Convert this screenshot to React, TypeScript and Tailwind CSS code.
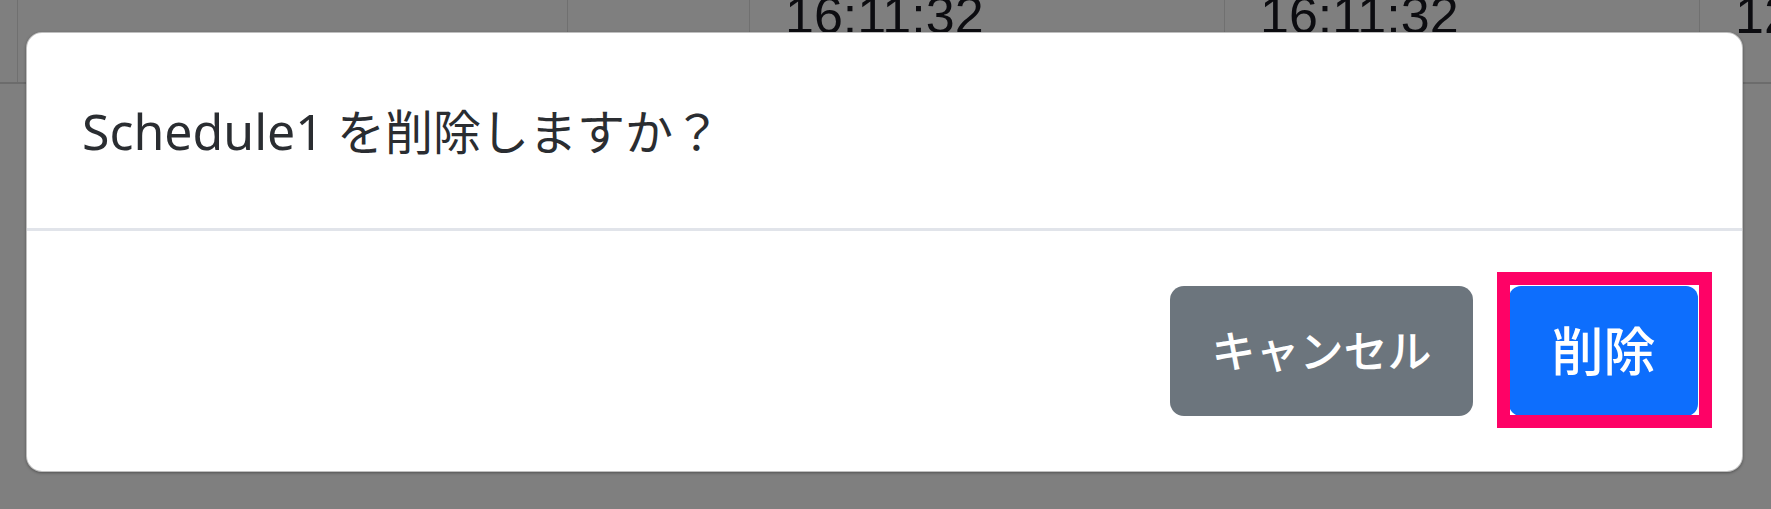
const cols = [
  { w: 18, text: "" },
  { w: 550, text: "" },
  { w: 182, text: "" },
  { w: 475, text: "16:11:32" },
  { w: 475, text: "16:11:32" },
  { w: 71, text: "12:11:32" },
];

function BackgroundTable() {
  return (
    <div className="flex h-[84px] border-b-2 border-[#6c6c6c]">
      {cols.map((c, i) => (
        <div
          key={i}
          style={{ width: c.w }}
          className={`shrink-0 overflow-hidden ${i < cols.length - 1 ? "border-r border-[#707070]" : ""}`}
        >
          {c.text ? (
            <div className="-mt-[11px] whitespace-nowrap pl-[35px] font-['Liberation_Sans',Arial,sans-serif] text-[52px] leading-none text-[#0c0c10]">
              {c.text}
            </div>
          ) : null}
        </div>
      ))}
    </div>
  );
}

export default function App() {
  return (
    <div className="relative h-[509px] w-[1771px] overflow-hidden bg-[#7f7f7f] font-['Noto_Sans','Noto_Sans_CJK_JP',sans-serif]">
      <BackgroundTable />

      {/* modal */}
      <div className="absolute left-[26px] top-[32px] flex h-[440px] w-[1717px] flex-col rounded-[16px] border border-black/25 bg-white shadow-[0_1px_3px_rgba(0,0,0,0.35)]">
        <div className="flex h-[195px] items-center pl-[55px]">
          <p className="whitespace-nowrap text-[48px] leading-none text-[#2a2d31]">
            <span className="text-[50px]">Schedule1</span>
            <span className="ml-[13px]">を削除しますか？</span>
          </p>
        </div>
        <div className="h-[3px] bg-[#e1e4ea]" />
        <div className="flex flex-1 items-center justify-end gap-[36px] pr-[44px]">
          <button
            type="button"
            className="flex h-[130px] w-[303px] items-center justify-center rounded-[14px] bg-[#6c757d] text-[44px] font-medium leading-none text-white"
          >
            キャンセル
          </button>
          <div className="relative">
            <button
              type="button"
              className="flex h-[130px] w-[189px] items-center justify-center rounded-[12px] bg-[#0d6efd] text-[52px] font-medium leading-none text-white"
            >
              削除
            </button>
            <span className="pointer-events-none absolute -bottom-[12px] -left-[12px] -right-[14px] -top-[14px] border-[13px] border-[#fe0266]" />
          </div>
        </div>
      </div>
    </div>
  );
}
